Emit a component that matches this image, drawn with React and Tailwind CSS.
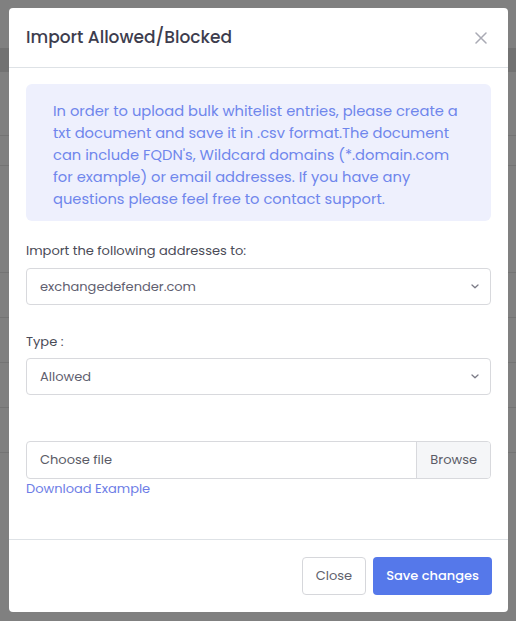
import React from "react";

const Chevron = () => (
  <svg width="8" height="5" viewBox="0 0 8 5" fill="none" className="shrink-0">
    <path d="M1 1l3 2.8L7 1" stroke="#7a7a86" strokeWidth="1.3" strokeLinecap="round" strokeLinejoin="round" />
  </svg>
);

const SelectBox = ({ value }) => (
  <div className="flex h-[37px] items-center justify-between rounded-[4px] border border-[#d8d9dd] bg-white pl-[13px] pr-[11px] text-[13px] text-[#5f6070]">
    <span>{value}</span>
    <Chevron />
  </div>
);

export default function App() {
  return (
    <div className="relative h-[621px] w-[516px] overflow-hidden bg-[#808080] font-['Poppins','Open_Sans',sans-serif]">
      {/* page behind the backdrop */}
      <div className="flex flex-col">
        <div className="h-[48px]" />
        <div className="h-[24px] bg-[#727272]" />
        <div className="h-[64px] border-b border-[#747474]" />
        <div className="h-[30px] border-b border-[#747474]" />
        <div className="h-[107px] border-b border-[#747474]" />
        <div className="h-[45px] border-b border-[#747474]" />
        <div className="h-[45px] border-b border-[#747474]" />
        <div className="h-[45px] border-b border-[#747474]" />
        <div className="h-[45px] border-b border-[#747474]" />
      </div>

      {/* modal */}
      <div className="absolute left-[9px] top-[8px] flex h-[604px] w-[499px] flex-col rounded-[4px] bg-white">
        <div className="flex h-[60px] items-center justify-between border-b border-[#dee2e6] pl-[17px] pr-[21px]">
          <h5 className="text-[17px] font-medium text-[#3d3d4e]">Import Allowed/Blocked</h5>
          <svg width="12" height="12" viewBox="0 0 12 12" fill="none">
            <path d="M1 1l10 10M11 1L1 11" stroke="#a9aab4" strokeWidth="1.5" strokeLinecap="round" />
          </svg>
        </div>

        <div className="flex-1 px-[17px] pt-[16px]">
          <div className="rounded-[6px] bg-[#eef0fd] pb-[11px] pl-[27px] pr-[25px] pt-[16px] text-[14.7px] leading-[22px] text-[#6f86ec]">
            In order to upload bulk whitelist entries, please create a txt document and save it in .csv format.The document can include FQDN's, Wildcard domains (*.domain.com for example) or email addresses. If you have any questions please feel free to contact support.
          </div>

          <div className="mt-[20px] text-[13px] leading-[20px] text-[#4a4b57]">Import the following addresses to:</div>
          <div className="mt-[7px]">
            <SelectBox value="exchangedefender.com" />
          </div>

          <div className="mt-[27px] text-[13px] leading-[20px] text-[#4a4b57]">Type :</div>
          <div className="mt-[6px]">
            <SelectBox value="Allowed" />
          </div>

          <div className="mt-[46px] flex h-[38px] overflow-hidden rounded-[4px] border border-[#d8d9dd] text-[13px] text-[#5a5b66]">
            <div className="flex flex-1 items-center pl-[13px]">Choose file</div>
            <div className="flex items-center border-l border-[#d8d9dd] bg-[#f5f6f8] px-[13px]">Browse</div>
          </div>
          <a href="#" className="block text-[13px] leading-[20px] text-[#6d7de6]">Download Example</a>
        </div>

        <div className="flex h-[73px] items-center justify-end gap-[7px] border-t border-[#dee2e6] px-[16px] pb-[1px]">
          <button className="h-[38px] rounded-[4px] border border-[#d6d7db] bg-white px-[13px] text-[13px] text-[#60616c]">Close</button>
          <button className="h-[38px] rounded-[4px] bg-[#5578ea] px-[13px] text-[13px] font-medium text-white">Save changes</button>
        </div>
      </div>
    </div>
  );
}
